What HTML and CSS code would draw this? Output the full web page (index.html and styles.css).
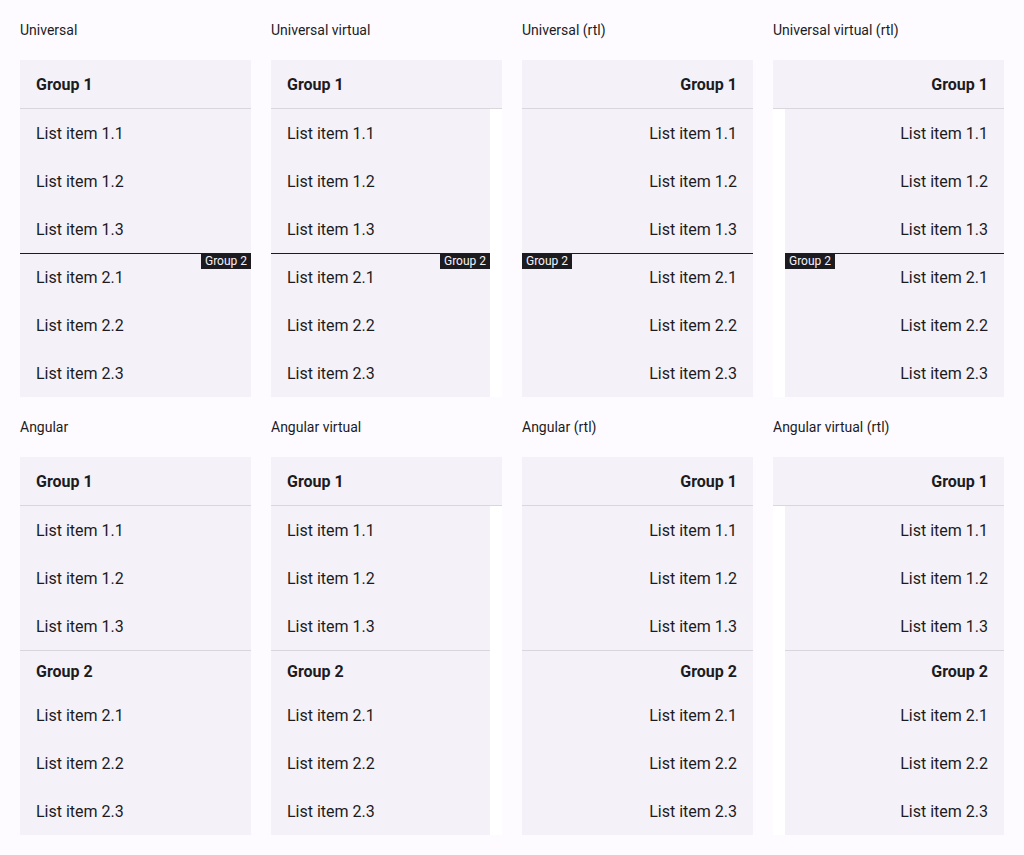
FILE: index.html
```html
<!DOCTYPE html>
<html>
<head>
<meta charset="utf-8">
<link rel="stylesheet" href="styles.css">
</head>
<body>
<div class="page">
  <!-- Row 1: Universal -->
  <section class="demo">
    <div class="label">Universal</div>
    <div class="panel">
      <div class="head">Group 1</div>
      <div class="body">
        <div class="list">
          <div class="item">List item 1.1</div>
          <div class="item">List item 1.2</div>
          <div class="item">List item 1.3</div>
          <div class="group2">
            <span class="sticky-line"></span><span class="badge">Group 2</span>
            <div class="item">List item 2.1</div>
            <div class="item">List item 2.2</div>
            <div class="item">List item 2.3</div>
          </div>
        </div>
      </div>
    </div>
  </section>
  <section class="demo">
    <div class="label">Universal virtual</div>
    <div class="panel">
      <div class="head">Group 1</div>
      <div class="body">
        <div class="list">
          <div class="item">List item 1.1</div>
          <div class="item">List item 1.2</div>
          <div class="item">List item 1.3</div>
          <div class="group2">
            <span class="sticky-line"></span><span class="badge">Group 2</span>
            <div class="item">List item 2.1</div>
            <div class="item">List item 2.2</div>
            <div class="item">List item 2.3</div>
          </div>
        </div>
        <div class="scrollbar"></div>
      </div>
    </div>
  </section>
  <section class="demo rtl" dir="rtl">
    <div class="label" dir="ltr">Universal (rtl)</div>
    <div class="panel">
      <div class="head">Group 1</div>
      <div class="body">
        <div class="list">
          <div class="item">List item 1.1</div>
          <div class="item">List item 1.2</div>
          <div class="item">List item 1.3</div>
          <div class="group2">
            <span class="sticky-line"></span><span class="badge">Group 2</span>
            <div class="item">List item 2.1</div>
            <div class="item">List item 2.2</div>
            <div class="item">List item 2.3</div>
          </div>
        </div>
      </div>
    </div>
  </section>
  <section class="demo rtl" dir="rtl">
    <div class="label" dir="ltr">Universal virtual (rtl)</div>
    <div class="panel">
      <div class="head">Group 1</div>
      <div class="body">
        <div class="list">
          <div class="item">List item 1.1</div>
          <div class="item">List item 1.2</div>
          <div class="item">List item 1.3</div>
          <div class="group2">
            <span class="sticky-line"></span><span class="badge">Group 2</span>
            <div class="item">List item 2.1</div>
            <div class="item">List item 2.2</div>
            <div class="item">List item 2.3</div>
          </div>
        </div>
        <div class="scrollbar"></div>
      </div>
    </div>
  </section>

  <!-- Row 2: Angular -->
  <section class="demo">
    <div class="label">Angular</div>
    <div class="panel">
      <div class="head">Group 1</div>
      <div class="body">
        <div class="list">
          <div class="item">List item 1.1</div>
          <div class="item">List item 1.2</div>
          <div class="item">List item 1.3</div>
          <div class="subhead">Group 2</div>
          <div class="item">List item 2.1</div>
          <div class="item">List item 2.2</div>
          <div class="item">List item 2.3</div>
        </div>
      </div>
    </div>
  </section>
  <section class="demo">
    <div class="label">Angular virtual</div>
    <div class="panel">
      <div class="head">Group 1</div>
      <div class="body">
        <div class="list">
          <div class="item">List item 1.1</div>
          <div class="item">List item 1.2</div>
          <div class="item">List item 1.3</div>
          <div class="subhead">Group 2</div>
          <div class="item">List item 2.1</div>
          <div class="item">List item 2.2</div>
          <div class="item">List item 2.3</div>
        </div>
        <div class="scrollbar"></div>
      </div>
    </div>
  </section>
  <section class="demo rtl" dir="rtl">
    <div class="label" dir="ltr">Angular (rtl)</div>
    <div class="panel">
      <div class="head">Group 1</div>
      <div class="body">
        <div class="list">
          <div class="item">List item 1.1</div>
          <div class="item">List item 1.2</div>
          <div class="item">List item 1.3</div>
          <div class="subhead">Group 2</div>
          <div class="item">List item 2.1</div>
          <div class="item">List item 2.2</div>
          <div class="item">List item 2.3</div>
        </div>
      </div>
    </div>
  </section>
  <section class="demo rtl" dir="rtl">
    <div class="label" dir="ltr">Angular virtual (rtl)</div>
    <div class="panel">
      <div class="head">Group 1</div>
      <div class="body">
        <div class="list">
          <div class="item">List item 1.1</div>
          <div class="item">List item 1.2</div>
          <div class="item">List item 1.3</div>
          <div class="subhead">Group 2</div>
          <div class="item">List item 2.1</div>
          <div class="item">List item 2.2</div>
          <div class="item">List item 2.3</div>
        </div>
        <div class="scrollbar"></div>
      </div>
    </div>
  </section>
</div>
</body>
</html>
```

FILE: styles.css
```css
html, body {
  margin: 0;
  padding: 0;
  background: #fdfbff;
  color: #1c1b1f;
  font-family: Roboto, "Liberation Sans", Arial, sans-serif;
}

.page {
  padding: 20px;
  display: grid;
  grid-template-columns: repeat(4, 231px);
  column-gap: 20px;
  row-gap: 20px;
}

.demo {
  display: flex;
  flex-direction: column;
}

.label {
  height: 20px;
  line-height: 20px;
  font-size: 14px;
  margin-bottom: 20px;
  text-align: left;
}

.panel {
  background: #f4f2f8;
  display: flex;
  flex-direction: column;
}

.head {
  box-sizing: border-box;
  height: 49px;
  padding: 2px 16px 0;
  line-height: 46px;
  font-size: 16px;
  font-weight: 700;
  border-bottom: 1px solid #d9d6de;
}

.body {
  display: flex;
}

.list {
  flex: 1;
  min-width: 0;
}

.scrollbar {
  width: 12px;
  background: #ffffff;
  flex: none;
}

.item {
  box-sizing: border-box;
  height: 48px;
  padding: 2px 16px 0;
  line-height: 46px;
  font-size: 16px;
}

.subhead {
  box-sizing: border-box;
  height: 41px;
  padding: 2px 16px 0;
  line-height: 38px;
  font-size: 16px;
  font-weight: 700;
  border-top: 1px solid #d9d6de;
}

.group2 {
  position: relative;
}

.sticky-line {
  position: absolute;
  top: 0;
  left: 0;
  right: 0;
  height: 1px;
  background: #1c1b1f;
}

.badge {
  position: absolute;
  top: 1px;
  right: 0;
  height: 15px;
  line-height: 15px;
  padding: 0 4px;
  font-size: 12px;
  background: #1c1b1f;
  color: #f4f2f8;
}

.rtl .badge {
  right: auto;
  left: 0;
}
```
